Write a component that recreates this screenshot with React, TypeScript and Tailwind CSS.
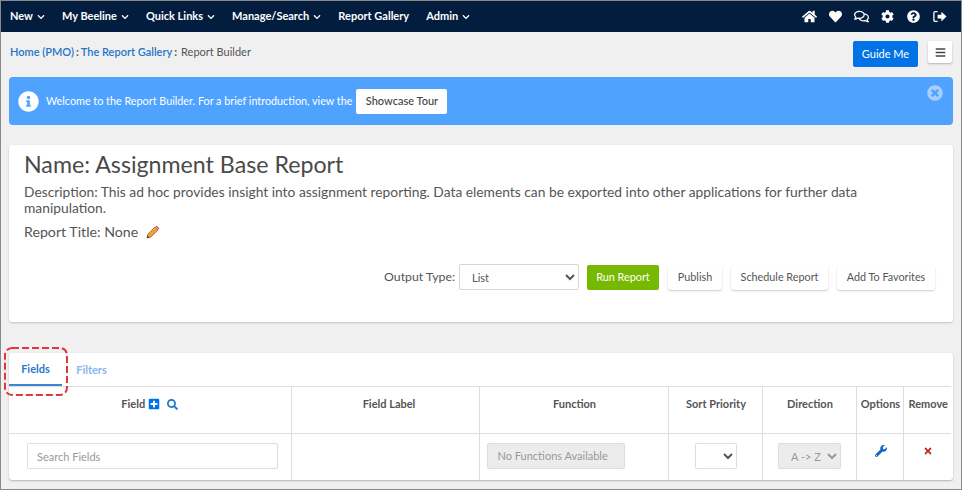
import { FaBars, FaChevronDown, FaCog, FaHeart, FaHome, FaInfoCircle, FaPlusSquare, FaQuestionCircle, FaRegComments, FaSearch, FaTimes, FaTimesCircle, FaWrench } from 'react-icons/fa';

const navItems = [
  { label: 'New', caret: true },
  { label: 'My Beeline', caret: true },
  { label: 'Quick Links', caret: true },
  { label: 'Manage/Search', caret: true },
  { label: 'Report Gallery', caret: false },
  { label: 'Admin', caret: true },
];

function Pencil() {
  return (
    <svg viewBox="0 0 14 14" className="w-[14px] h-[14px] ml-2">
      <path d="M1 13l1-4 7-7 3 3-7 7z" fill="#e8a33d" stroke="#a8661c" strokeWidth="0.8" />
      <path d="M9.5 1.5l1-1 3 3-1 1z" fill="#d9534f" />
      <path d="M1 13l.6-2.4 1.8 1.8z" fill="#3d3d3d" />
    </svg>
  );
}

function SignOut() {
  return (
    <svg viewBox="0 0 16 16" className="w-[15px] h-[15px]" fill="none">
      <path d="M6 2.8H3.5A1.5 1.5 0 0 0 2 4.3v7.4a1.5 1.5 0 0 0 1.5 1.5H6" stroke="currentColor" strokeWidth="1.4" />
      <path d="M6 6h4V2.8L15.5 8 10 13.2V10H6z" fill="currentColor" />
    </svg>
  );
}

function ActionButton({ label, className }: { label: string; className: string }) {
  return (
    <button className={`${className} h-[25px] bg-white rounded-[3px] shadow-[0_1px_2px_rgba(0,0,0,0.2)] text-[10.8px] text-[#555]`}>
      {label}
    </button>
  );
}

export default function App() {
  return (
    <div className="relative w-[962px] h-[490px] overflow-hidden border border-[#8a8a8a] bg-[#f0f0f0] font-['Lato','Open_Sans',sans-serif] text-[#555]">
      <nav className="flex items-center justify-between h-[31px] pl-[9px] pr-[14px] bg-[#021d3d] text-white">
        <div className="flex items-center gap-[17px] text-[11px] font-bold">
          {navItems.map((item) => (
            <span key={item.label} className="flex items-center gap-[4px]">
              {item.label}
              {item.caret && <FaChevronDown className="w-[8px] h-[8px]" />}
            </span>
          ))}
        </div>
        <div className="flex items-center gap-[11px]">
          <FaHome className="w-[15px] h-[15px]" />
          <FaHeart className="w-[13px] h-[13px] mx-[1px]" />
          <FaRegComments className="w-[15px] h-[15px]" />
          <FaCog className="w-[13px] h-[13px] mx-[1px]" />
          <FaQuestionCircle className="w-[13px] h-[13px] mx-[1px]" />
          <SignOut />
        </div>
      </nav>

      <div className="flex justify-between h-[45px] pl-[9px] pr-[9px] pt-[9px]">
        <div className="flex h-[22px] items-center text-[11px]">
          <span className="font-semibold text-[#1f76c8]">Home (PMO)</span>
          <span className="mx-[2px] font-bold">:</span>
          <span className="font-semibold text-[#1f76c8]">The Report Gallery</span>
          <span className="ml-[2px] mr-[4px] font-bold">:</span>
          <span>Report Builder</span>
        </div>
        <div className="flex items-start gap-[10px]">
          <button className="w-[65px] h-[26px] rounded-[2px] bg-[#0273e6] text-white text-[11px]">Guide Me</button>
          <button className="flex items-center justify-center w-[24px] h-[22px] bg-white rounded-[2px] shadow-[0_1px_2px_rgba(0,0,0,0.25)]">
            <FaBars className="text-[11px] text-[#444]" />
          </button>
        </div>
      </div>

      <div className="flex items-center justify-between h-[48px] mx-[8px] pl-[9px] pr-[10px] rounded-[4px] bg-[#4fa3ff] text-white">
        <div className="flex items-center">
          <FaInfoCircle className="w-[21px] h-[21px] mr-[7px]" />
          <span className="text-[10.8px]">Welcome to the Report Builder. For a brief introduction, view the</span>
          <button className="ml-[4px] w-[91px] h-[25px] bg-white rounded-[2px] text-[11px] font-medium text-[#444]">
            Showcase Tour
          </button>
        </div>
        <FaTimesCircle className="self-start mt-[8px] w-[16px] h-[16px] text-[#a6cdfb]" />
      </div>

      <section className="mx-[8px] mt-[20px] h-[177px] px-[15px] pt-[4px] bg-white rounded-[3px] shadow-[0_1px_2px_rgba(0,0,0,0.2)]">
        <h1 className="text-[23.2px] leading-[30px] text-[#4a4a4a]">Name: Assignment Base Report</h1>
        <p className="mt-[5px] text-[13.8px] leading-[16px] w-[880px]">
          Description: This ad hoc provides insight into assignment reporting. Data elements can be exported into other applications for further data manipulation.
        </p>
        <div className="flex items-center mt-[7px] text-[14.2px] leading-[18px]">
          Report Title: None
          <Pencil />
        </div>
        <div className="flex items-center justify-end gap-[9px] mt-[23px] pr-[3px]">
          <label className="text-[12.3px] mr-[-5px]">Output Type:</label>
          <select className="w-[120px] h-[26px] -mr-[1px] pl-[8px] bg-white border border-[#d5d5d5] rounded-[2px] text-[11px] text-[#555]">
            <option>List</option>
          </select>
          <button className="w-[72px] h-[25px] rounded-[2px] bg-[#76b900] text-white text-[10.8px]">Run Report</button>
          <ActionButton label="Publish" className="w-[54px]" />
          <ActionButton label="Schedule Report" className="w-[97px]" />
          <ActionButton label="Add To Favorites" className="w-[98px]" />
        </div>
      </section>

      <section className="mx-[8px] mt-[31px] bg-white rounded-[3px] shadow-[0_1px_2px_rgba(0,0,0,0.25)]">
        <div className="flex h-[33px] text-[11px] font-bold">
          <span className="flex items-center justify-center w-[53px] pt-[1px] border-b-2 border-[#3b86d1] text-[#2a78c9]">Fields</span>
          <span className="flex items-center justify-center w-[59px] pt-[1px] text-[#85b8ea]">Filters</span>
        </div>
        <table className="w-[942px] table-fixed border-collapse text-[11px]">
          <colgroup>
            <col className="w-[282px]" />
            <col className="w-[188px]" />
            <col className="w-[189px]" />
            <col className="w-[94px]" />
            <col className="w-[94px]" />
            <col className="w-[47px]" />
            <col className="w-[48px]" />
          </colgroup>
          <thead>
            <tr className="h-[47px] border-y border-[#ddd]">
              <th className="pt-[9px] align-top font-bold">
                <span className="inline-flex items-center gap-[3px]">
                  Field
                  <FaPlusSquare className="text-[12px] text-[#0273e6]" />
                  <FaSearch className="ml-[4px] text-[11px] text-[#1f76c8]" />
                </span>
              </th>
              <th className="pt-[9px] pl-[8px] align-top font-bold border-l border-[#ddd]">Field Label</th>
              {['Function', 'Sort Priority', 'Direction', 'Options', 'Remove'].map((h) => (
                <th key={h} className="pt-[9px] pl-[2px] align-top font-bold border-l border-[#ddd]">{h}</th>
              ))}
            </tr>
          </thead>
          <tbody>
            <tr className="h-[46px]">
              <td className="pl-[18px] pb-[1px]">
                <input placeholder="Search Fields" className="w-[251px] h-[26px] px-[9px] border border-[#ddd] rounded-[2px] text-[11px] placeholder:text-[#999]" />
              </td>
              <td className="border-l border-[#ddd]" />
              <td className="pl-[7px] pb-[1px] border-l border-[#ddd]">
                <div className="flex items-center w-[138px] h-[26px] pl-[10px] bg-[#ececec] border border-[#ddd] rounded-[2px] text-[#999]">No Functions Available</div>
              </td>
              <td className="pl-[2px] pb-[1px] border-l border-[#ddd] text-center">
                <select className="w-[42px] h-[26px] bg-white border border-[#ddd] rounded-[2px]" />
              </td>
              <td className="pl-[1px] pb-[1px] border-l border-[#ddd] text-center">
                <select disabled className="w-[63px] h-[26px] pl-[8px] bg-[#ececec] border border-[#ddd] rounded-[2px] text-[#999]">
                  <option>{'A -> Z'}</option>
                </select>
              </td>
              <td className="pl-[2px] pb-[11px] border-l border-[#ddd]">
                <FaWrench className="mx-auto text-[12px] text-[#1666c0]" />
              </td>
              <td className="pl-[2px] pb-[11px] border-l border-[#ddd]">
                <FaTimes className="mx-auto text-[10px] text-[#c0282d]" />
              </td>
            </tr>
          </tbody>
        </table>
      </section>

      <svg className="absolute left-[2px] top-[345px] w-[68px] h-[52px]" viewBox="0 0 68 52" fill="none">
        <rect x="2" y="2" width="62" height="47" rx="7" stroke="#e5333f" strokeWidth="2" strokeDasharray="7 3" />
      </svg>
    </div>
  );
}
